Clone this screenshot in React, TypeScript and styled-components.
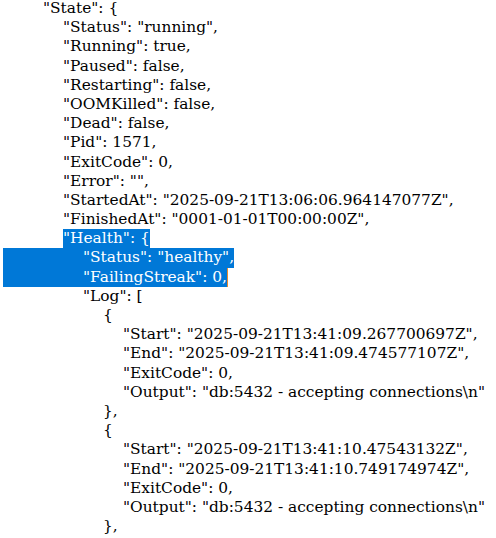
import React from "react";
import styled, { createGlobalStyle } from "styled-components";

const Global = createGlobalStyle`
  html, body { margin: 0; padding: 0; background: #ffffff; }
  body { overflow: hidden; }
`;

const INDENT = 20;

const Doc = styled.div`
  margin-top: -1px;
  padding-left: 3px;
  font-family: "DejaVu Serif", serif;
  font-size: 15.4px;
  line-height: 19.2px;
  color: #000000;
  white-space: pre;
`;

const Line = styled.div<{ $level: number }>`
  height: 19.2px;
  padding-left: ${(p) => p.$level * INDENT}px;
`;

const SelLine = styled.div`
  height: 19.2px;
`;

const Sel = styled.span<{ $pad: number; $caret?: boolean }>`
  display: inline-block;
  height: 19.2px;
  padding-left: ${(p) => p.$pad}px;
  background: #0078d7;
  color: #ffffff;
  border-right: ${(p) => (p.$caret ? "1px solid #e8892c" : "none")};
`;

type L = { level: number; text: string; sel?: "text" | "full"; caret?: boolean };

const lines: L[] = [
  { level: 2, text: '"State": {' },
  { level: 3, text: '"Status": "running",' },
  { level: 3, text: '"Running": true,' },
  { level: 3, text: '"Paused": false,' },
  { level: 3, text: '"Restarting": false,' },
  { level: 3, text: '"OOMKilled": false,' },
  { level: 3, text: '"Dead": false,' },
  { level: 3, text: '"Pid": 1571,' },
  { level: 3, text: '"ExitCode": 0,' },
  { level: 3, text: '"Error": "",' },
  { level: 3, text: '"StartedAt": "2025-09-21T13:06:06.964147077Z",' },
  { level: 3, text: '"FinishedAt": "0001-01-01T00:00:00Z",' },
  { level: 3, text: '"Health": {', sel: "text" },
  { level: 4, text: '"Status": "healthy",', sel: "full" },
  { level: 4, text: '"FailingStreak": 0,', sel: "full", caret: true },
  { level: 4, text: '"Log": [' },
  { level: 5, text: "{" },
  { level: 6, text: '"Start": "2025-09-21T13:41:09.267700697Z",' },
  { level: 6, text: '"End": "2025-09-21T13:41:09.474577107Z",' },
  { level: 6, text: '"ExitCode": 0,' },
  { level: 6, text: '"Output": "db:5432 - accepting connections\\n"' },
  { level: 5, text: "}," },
  { level: 5, text: "{" },
  { level: 6, text: '"Start": "2025-09-21T13:41:10.47543132Z",' },
  { level: 6, text: '"End": "2025-09-21T13:41:10.749174974Z",' },
  { level: 6, text: '"ExitCode": 0,' },
  { level: 6, text: '"Output": "db:5432 - accepting connections\\n"' },
  { level: 5, text: "}," },
  { level: 5, text: "{" },
];

export default function App() {
  return (
    <>
      <Global />
      <Doc>
        {lines.map((l, i) => {
          if (l.sel === "text") {
            return (
              <Line key={i} $level={l.level}>
                <Sel $pad={0}>{l.text}</Sel>
              </Line>
            );
          }
          if (l.sel === "full") {
            return (
              <SelLine key={i}>
                <Sel $pad={l.level * INDENT} $caret={l.caret}>{l.text}</Sel>
              </SelLine>
            );
          }
          return (
            <Line key={i} $level={l.level}>
              {l.text}
            </Line>
          );
        })}
      </Doc>
    </>
  );
}
